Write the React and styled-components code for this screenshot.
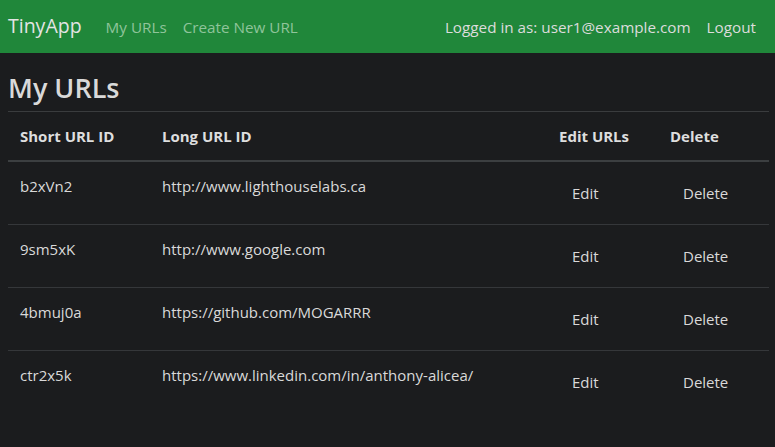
import React from 'react';
import styled, { createGlobalStyle } from 'styled-components';

const GlobalStyle = createGlobalStyle`
  html, body { margin: 0; padding: 0; background: #1b1c1e; }
  body {
    font-family: "Open Sans", "Noto Sans", "Liberation Sans", sans-serif;
    font-size: 15px;
    color: #d9d9d9;
    min-height: 447px;
  }
  * { box-sizing: border-box; }
`;

const NavBar = styled.nav`
  display: flex;
  align-items: center;
  height: 53px;
  padding: 0 11px 0 8px;
  background: #20873a;
`;
const Brand = styled.a`
  font-size: 19.5px;
  color: #e4e4e4;
  margin-right: 16px;
  padding-bottom: 2px;
`;
const NavLinks = styled.div`
  display: flex;
  align-items: center;
  margin-left: ${p => (p.$right ? 'auto' : '0')};
`;
const NavLink = styled.a`
  padding: 0 8px;
  font-size: 15.25px;
  color: ${p => (p.$muted ? '#8fc49a' : '#dcdcdc')};
`;

const Main = styled.main`
  padding: 0 6px 0 8px;
`;
const Title = styled.h3`
  margin: 0;
  padding: 19px 0 7px;
  font-size: 27px;
  font-weight: 600;
  line-height: 32px;
  color: #d9d9d9;
`;
const Table = styled.table`
  width: 100%;
  border-collapse: collapse;
  table-layout: fixed;
  border-top: 1px solid #3a3c3e;
`;
const Th = styled.th`
  width: ${p => p.$w}px;
  text-align: left;
  font-weight: 700;
  padding: 12px 12px 11px;
  line-height: 25px;
  border-bottom: 2px solid #3c3f41;
  color: #dedede;
`;
const Td = styled.td`
  vertical-align: top;
  padding: 12px;
  line-height: 24px;
  border-top: ${p => (p.$first ? 'none' : '1px solid #35373a')};
`;
const ActionButton = styled.button`
  font: inherit;
  color: #d9d9d9;
  background: transparent;
  border: 1px solid transparent;
  padding: 6px 12px;
  line-height: 24px;
  margin-left: 0;
  cursor: pointer;
`;

const urls = [
  { id: 'b2xVn2', long: 'http://www.lighthouselabs.ca' },
  { id: '9sm5xK', long: 'http://www.google.com' },
  { id: '4bmuj0a', long: 'https://github.com/MOGARRR' },
  { id: 'ctr2x5k', long: 'https://www.linkedin.com/in/anthony-alicea/' },
];

export default function App() {
  return (
    <>
      <GlobalStyle />
      <NavBar>
        <Brand>TinyApp</Brand>
        <NavLinks>
          <NavLink $muted>My URLs</NavLink>
          <NavLink $muted>Create New URL</NavLink>
        </NavLinks>
        <NavLinks $right>
          <NavLink>Logged in as: user1@example.com</NavLink>
          <NavLink>Logout</NavLink>
        </NavLinks>
      </NavBar>
      <Main>
        <Title>My URLs</Title>
        <Table>
          <thead>
            <tr>
              <Th $w={142}>Short URL ID</Th>
              <Th $w={397}>Long URL ID</Th>
              <Th $w={111}>Edit URLs</Th>
              <Th $w={111}>Delete</Th>
            </tr>
          </thead>
          <tbody>
            {urls.map((u, i) => (
              <tr key={u.id}>
                <Td $first={i === 0}>{u.id}</Td>
                <Td $first={i === 0}>{u.long}</Td>
                <Td $first={i === 0}><ActionButton>Edit</ActionButton></Td>
                <Td $first={i === 0}><ActionButton>Delete</ActionButton></Td>
              </tr>
            ))}
          </tbody>
        </Table>
      </Main>
    </>
  );
}
